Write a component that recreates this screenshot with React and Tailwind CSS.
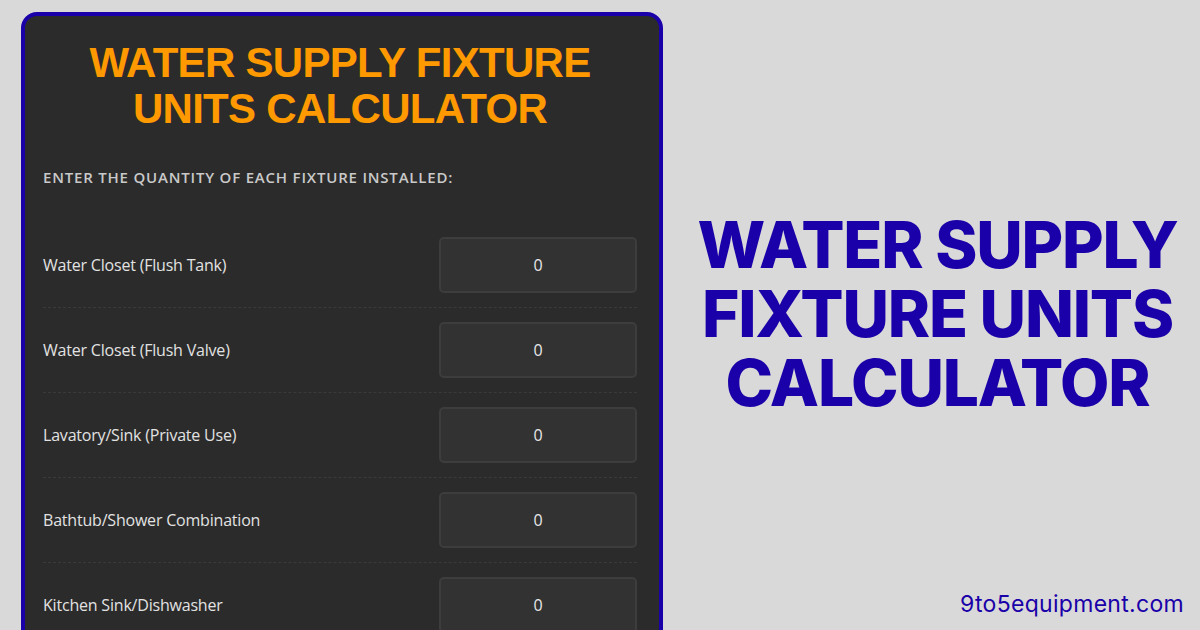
const fixtures = [
  "Water Closet (Flush Tank)",
  "Water Closet (Flush Valve)",
  "Lavatory/Sink (Private Use)",
  "Bathtub/Shower Combination",
  "Kitchen Sink/Dishwasher",
];

const FixtureRow = ({ label, last }) => (
  <div
    className={`flex items-center justify-between py-[14px] ${
      last ? "" : "border-b border-dashed border-[#3a3a3a]"
    }`}
  >
    <span className="text-[16px] tracking-[-0.2px] text-[#e2e2e2]">{label}</span>
    <input
      type="text"
      defaultValue="0"
      className="w-[198px] h-[56px] bg-[#323232] border-2 border-[#3d3d3d] rounded-[5px] text-center text-[16px] text-[#e8e8e8] outline-none"
    />
  </div>
);

export default function App() {
  return (
    <div className="w-[1200px] h-[630px] bg-[#d9d9d9] overflow-hidden flex">
      <div className="ml-[21px] mt-[12px] w-[642px] h-[640px] shrink-0 bg-[#2b2b2b] border-4 border-[#1a00a8] rounded-[16px] pl-[18px] pr-[22px] [font-family:'Open_Sans','Noto_Sans',sans-serif]">
        <h1 className="mt-[24px] text-center text-[42px] leading-[46px] font-bold tracking-[-0.7px] text-[#ff9900] [font-family:'Liberation_Sans',sans-serif]">
          WATER SUPPLY FIXTURE
          <br />
          UNITS CALCULATOR
        </h1>
        <p className="mt-[34px] text-[15px] leading-[22px] font-semibold tracking-[0.8px] text-[#c9c9c9]">
          ENTER THE QUANTITY OF EACH FIXTURE INSTALLED:
        </p>
        <div className="mt-[35px]">
          {fixtures.map((f, i) => (
            <FixtureRow key={f} label={f} last={i === fixtures.length - 1} />
          ))}
        </div>
      </div>
      <div className="flex-1 flex flex-col">
        <div className="flex-1 flex items-center justify-center pt-[40px] pl-[12px]">
          <h2 className="text-center text-[64px] font-extrabold text-[#1a00a8] tracking-[-1.2px] [font-family:'Inter','DejaVu_Sans',sans-serif]">
            <span className="block leading-[69px]">WATER SUPPLY</span>
            <span className="block leading-[69px]">FIXTURE UNITS</span>
            <span className="block leading-[69px]">CALCULATOR</span>
          </h2>
        </div>
        <div className="text-right pr-[16px] pb-[9px] text-[23px] tracking-[0.3px] text-[#1a00a8] [font-family:'Inter',sans-serif]">
          9to5equipment.com
        </div>
      </div>
    </div>
  );
}
